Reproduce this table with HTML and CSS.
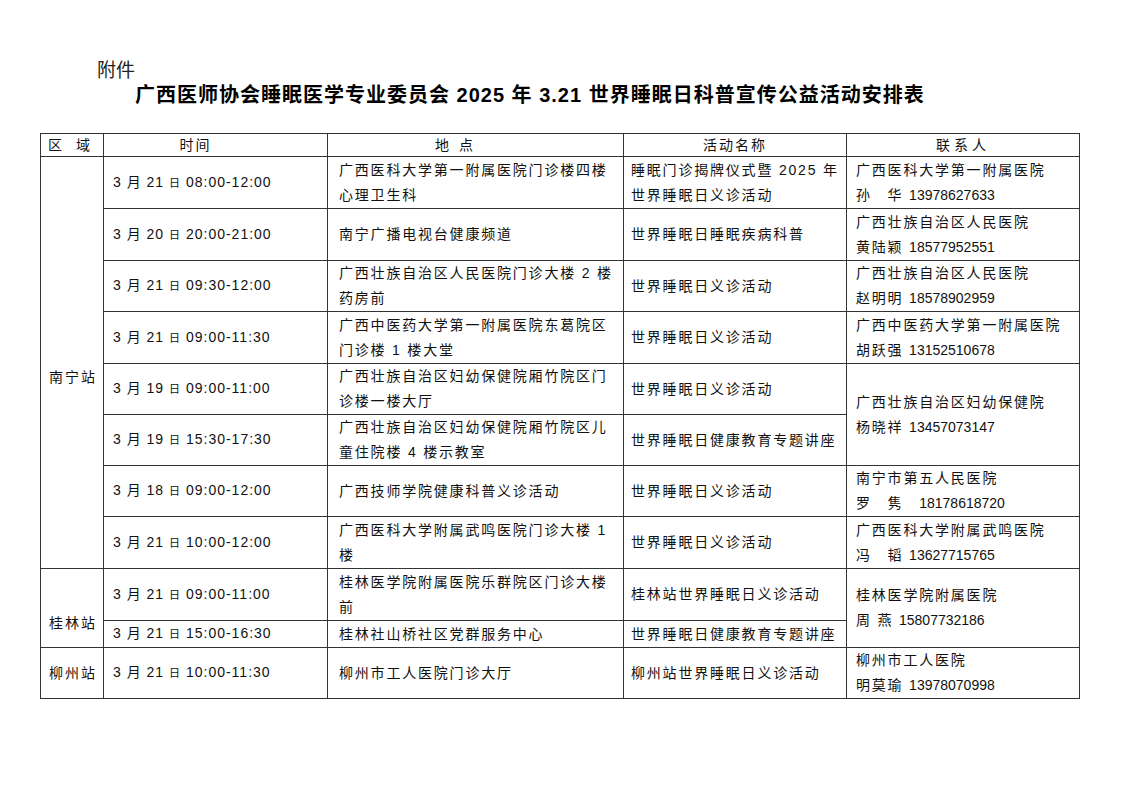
FILE: index.html
```html
<!DOCTYPE html>
<html lang="zh-CN">
<head>
<meta charset="utf-8">
<title>广西医师协会睡眠医学专业委员会2025年3.21世界睡眠日科普宣传公益活动安排表</title>
<link rel="stylesheet" href="styles.css">
</head>
<body>
<div class="page">
  <div class="attach">附件</div>
  <h1 class="title">广西医师协会睡眠医学专业委员会 2025 年 3.21 世界睡眠日科普宣传公益活动安排表</h1>
  <table class="sched">
    <colgroup>
      <col class="c-area"><col class="c-time"><col class="c-place"><col class="c-act"><col class="c-contact">
    </colgroup>
    <thead>
      <tr class="r-head">
        <th class="h-area">区&nbsp;&nbsp;域</th>
        <th class="h-time">时间</th>
        <th class="h-place">地&nbsp;点</th>
        <th class="h-act">活动名称</th>
        <th class="h-contact">联系人</th>
      </tr>
    </thead>
    <tbody>
      <tr class="r52">
        <td class="area area-big" rowspan="8">南宁站</td>
        <td class="time">3 月 21 <span class="ri">日</span> 08:00-12:00</td>
        <td class="place">广西医科大学第一附属医院门诊楼四楼<br>心理卫生科</td>
        <td class="act">睡眠门诊揭牌仪式暨 2025 年<br>世界睡眠日义诊活动</td>
        <td class="contact">广西医科大学第一附属医院<br>孙　华 <span class="tel">13978627633</span></td>
      </tr>
      <tr class="r52">
        <td class="time">3 月 20 <span class="ri">日</span> 20:00-21:00</td>
        <td class="place">南宁广播电视台健康频道</td>
        <td class="act">世界睡眠日睡眠疾病科普</td>
        <td class="contact">广西壮族自治区人民医院<br>黄陆颖 <span class="tel">18577952551</span></td>
      </tr>
      <tr class="r51">
        <td class="time">3 月 21 <span class="ri">日</span> 09:30-12:00</td>
        <td class="place">广西壮族自治区人民医院门诊大楼 2 楼<br>药房前</td>
        <td class="act">世界睡眠日义诊活动</td>
        <td class="contact">广西壮族自治区人民医院<br>赵明明 <span class="tel">18578902959</span></td>
      </tr>
      <tr class="r52">
        <td class="time">3 月 21 <span class="ri">日</span> 09:00-11:30</td>
        <td class="place">广西中医药大学第一附属医院东葛院区<br>门诊楼 1 楼大堂</td>
        <td class="act">世界睡眠日义诊活动</td>
        <td class="contact">广西中医药大学第一附属医院<br>胡跃强 <span class="tel">13152510678</span></td>
      </tr>
      <tr class="r51">
        <td class="time">3 月 19 <span class="ri">日</span> 09:00-11:00</td>
        <td class="place">广西壮族自治区妇幼保健院厢竹院区门<br>诊楼一楼大厅</td>
        <td class="act">世界睡眠日义诊活动</td>
        <td class="contact" rowspan="2">广西壮族自治区妇幼保健院<br>杨晓祥 <span class="tel">13457073147</span></td>
      </tr>
      <tr class="r51">
        <td class="time">3 月 19 <span class="ri">日</span> 15:30-17:30</td>
        <td class="place">广西壮族自治区妇幼保健院厢竹院区儿<br>童住院楼 4 楼示教室</td>
        <td class="act">世界睡眠日健康教育专题讲座</td>
      </tr>
      <tr class="r51">
        <td class="time">3 月 18 <span class="ri">日</span> 09:00-12:00</td>
        <td class="place">广西技师学院健康科普义诊活动</td>
        <td class="act">世界睡眠日义诊活动</td>
        <td class="contact">南宁市第五人民医院<br>罗　隽　<span class="tel">18178618720</span></td>
      </tr>
      <tr class="r52">
        <td class="time">3 月 21 <span class="ri">日</span> 10:00-12:00</td>
        <td class="place">广西医科大学附属武鸣医院门诊大楼 1<br>楼</td>
        <td class="act">世界睡眠日义诊活动</td>
        <td class="contact">广西医科大学附属武鸣医院<br>冯　韬 <span class="tel">13627715765</span></td>
      </tr>
      <tr class="r52">
        <td class="area area-big" rowspan="2">桂林站</td>
        <td class="time">3 月 21 <span class="ri">日</span> 09:00-11:00</td>
        <td class="place">桂林医学院附属医院乐群院区门诊大楼<br>前</td>
        <td class="act">桂林站世界睡眠日义诊活动</td>
        <td class="contact" rowspan="2">桂林医学院附属医院<br>周 燕 <span class="tel">15807732186</span></td>
      </tr>
      <tr class="r25">
        <td class="time">3 月 21 <span class="ri">日</span> 15:00-16:30</td>
        <td class="place">桂林社山桥社区党群服务中心</td>
        <td class="act">世界睡眠日健康教育专题讲座</td>
      </tr>
      <tr class="r51">
        <td class="area">柳州站</td>
        <td class="time">3 月 21 <span class="ri">日</span> 10:00-11:30</td>
        <td class="place">柳州市工人医院门诊大厅</td>
        <td class="act">柳州站世界睡眠日义诊活动</td>
        <td class="contact">柳州市工人医院<br>明莫瑜 <span class="tel">13978070998</span></td>
      </tr>
    </tbody>
  </table>
</div>
</body>
</html>
```

FILE: styles.css
```css
* { box-sizing: border-box; }

body {
  margin: 0;
  background: #ffffff;
  color: #111111;
  font-family: "Liberation Sans", "Noto Sans CJK SC", sans-serif;
}

.page {
  padding: 56px 44px 0 40px;
}

.attach {
  margin-left: 57px;
  font-family: "Noto Sans CJK SC", sans-serif;
  font-size: 19px;
  line-height: 26px;
  color: #222;
}

.title {
  margin: 0 0 25px 0;
  padding-left: 95px;
  font-family: "Liberation Sans", "Noto Sans CJK SC", sans-serif;
  font-weight: bold;
  font-size: 20px;
  letter-spacing: 1px;
  line-height: 26px;
  color: #000;
  white-space: nowrap;
}

.sched {
  width: 1039px;
  table-layout: fixed;
  border-collapse: collapse;
  border: 1.5px solid #222;
  font-size: 14px;
  letter-spacing: 1.8px;
  line-height: 25px;
}

.c-area { width: 63px; }
.c-time { width: 224px; }
.c-place { width: 296px; }
.c-act { width: 223px; }
.c-contact { width: 233px; }

.sched th,
.sched td {
  border: 1px solid #333;
  padding: 0;
  vertical-align: middle;
  white-space: nowrap;
  overflow: hidden;
  font-weight: normal;
}

.sched th {
  text-align: center;
  height: 23px;
  line-height: 22px;
  letter-spacing: 2px;
}

.h-area { padding-right: 4px !important; }
.h-time { padding-right: 40px !important; }
.h-place { padding-right: 40px !important; letter-spacing: 3px !important; }
.h-contact { letter-spacing: 4px !important; }

.r52 td { height: 52px; }
.r51 td { height: 51px; }
.r25 td { height: 25px; }

.area {
  padding-left: 8px !important;
  letter-spacing: 2px;
}

.area-big {
  padding-top: 30px !important;
}

.time {
  padding-left: 9px !important;
  letter-spacing: 1px;
}

.ri {
  font-size: 11px;
  letter-spacing: 1px;
}

.place {
  padding-left: 11px !important;
}

.act {
  padding-left: 7px !important;
}

.contact {
  padding-left: 9px !important;
}

.tel {
  letter-spacing: 0;
}
```
